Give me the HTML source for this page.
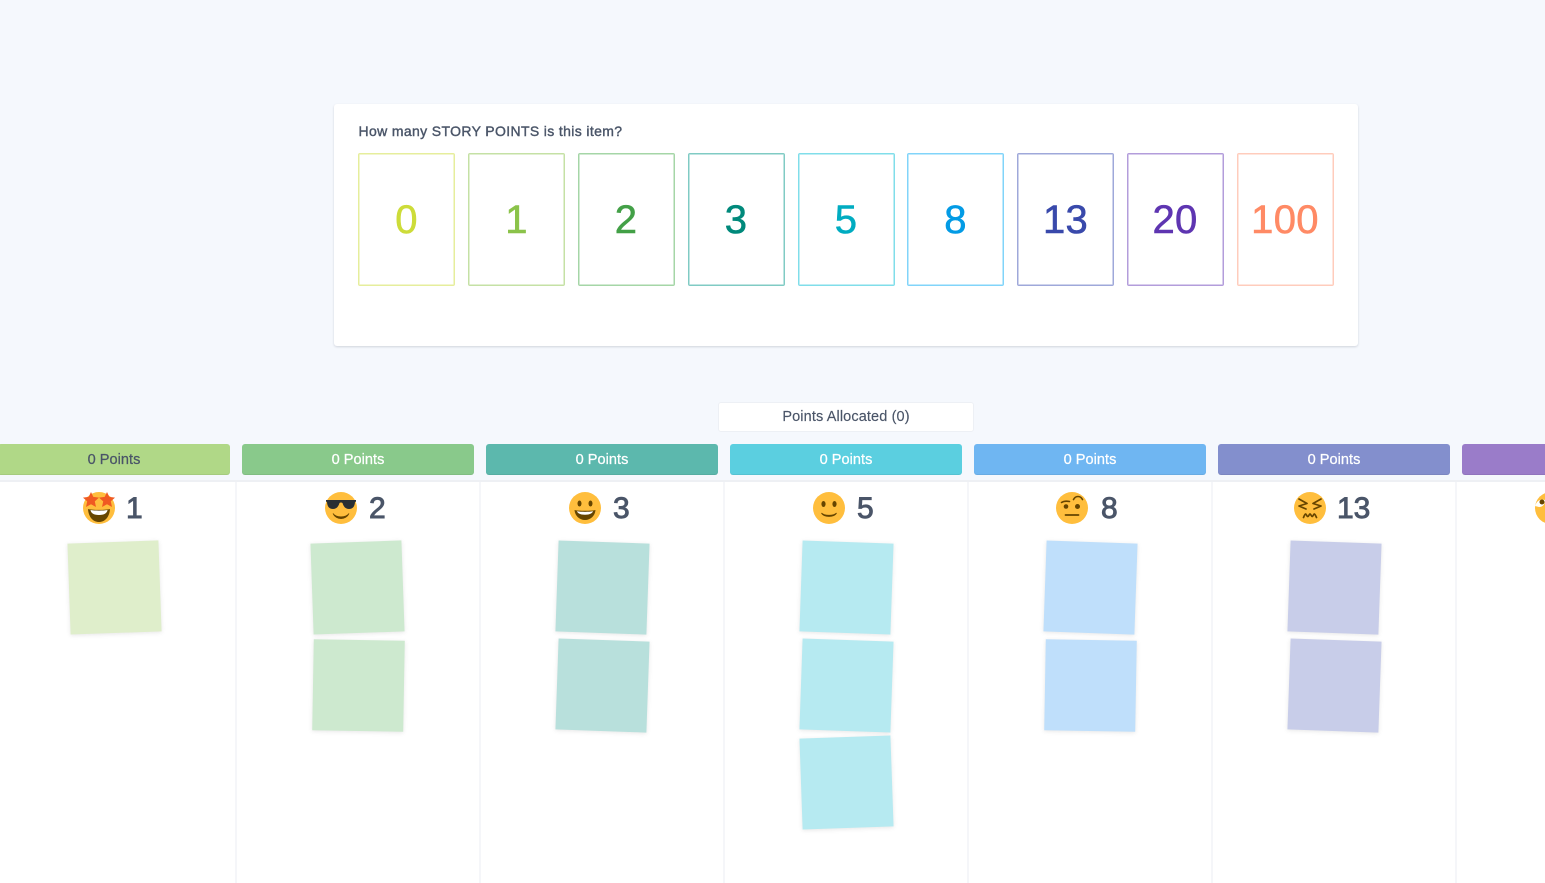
<!DOCTYPE html>
<html><head><meta charset="utf-8"><style>
html,body{margin:0;padding:0;width:1545px;height:883px;overflow:hidden;background:#f5f8fd}
body{position:relative;font-family:"Liberation Sans",sans-serif;color:#4a5568}
.a{position:absolute;box-sizing:border-box}
.panel{left:334px;top:104px;width:1023.5px;height:241.5px;background:#fff;border-radius:3px;box-shadow:0 1px 2px rgba(40,50,70,.18)}
.q{left:358.5px;top:123px;font-size:14px;line-height:16px;white-space:nowrap;-webkit-text-stroke:.4px #4a5568;letter-spacing:.36px}
.c{top:153px;width:97px;height:133px;background:#fff;border:1px solid;border-radius:2px;text-align:center;font-size:40px;line-height:132px;-webkit-text-stroke:.6px currentColor;letter-spacing:.3px}
.alloc{left:718px;top:402px;width:256px;height:30px;background:#fff;border:1px solid #edf0f5;border-radius:3px;text-align:center;font-size:14.5px;line-height:28px;letter-spacing:.12px;-webkit-text-stroke:.15px #4a5568}
.h{top:444px;width:232px;height:31px;border-radius:3px;text-align:center;color:#fff;font-size:14.5px;line-height:32.5px;box-shadow:inset 0 -1px 0 rgba(0,0,0,.06);-webkit-text-stroke:.25px currentColor;letter-spacing:.05px}
.board{left:0;top:480px;width:1545px;height:403px;background:#fff;border-top:2px solid #eef0f4}
.l{top:482px;width:2px;height:401px;background:#f5f6f9}
.n{top:490px;font-size:30px;line-height:38px;-webkit-text-stroke:.9px #4a5568;white-space:nowrap}
.s{width:90.5px;height:90.5px;box-shadow:0 1px 4px rgba(60,60,60,.13)}
svg{position:absolute;top:492px;width:32px;height:32px}
</style></head><body>
<div class="a panel"></div>
<div class="a q">How many STORY POINTS is this item?</div>
<div class="a c" style="left:358px;border-color:#e6ee9c;color:#cddc39;box-shadow:inset 0 0 0 .5px #e6ee9c">0</div>
<div class="a c" style="left:468px;border-color:#c5e1a5;color:#8bc34a;box-shadow:inset 0 0 0 .5px #c5e1a5">1</div>
<div class="a c" style="left:577.5px;border-color:#a5d6a7;color:#43a047;box-shadow:inset 0 0 0 .5px #a5d6a7">2</div>
<div class="a c" style="left:687.5px;border-color:#80cbc4;color:#00897b;box-shadow:inset 0 0 0 .5px #80cbc4">3</div>
<div class="a c" style="left:797.5px;border-color:#80deea;color:#00acc1;box-shadow:inset 0 0 0 .5px #80deea">5</div>
<div class="a c" style="left:907px;border-color:#81d4fa;color:#039be5;box-shadow:inset 0 0 0 .5px #81d4fa">8</div>
<div class="a c" style="left:1017px;border-color:#9fa8da;color:#3949ab;box-shadow:inset 0 0 0 .5px #9fa8da">13</div>
<div class="a c" style="left:1126.5px;border-color:#b39ddb;color:#5e35b1;box-shadow:inset 0 0 0 .5px #b39ddb">20</div>
<div class="a c" style="left:1236.5px;border-color:#ffccbc;color:#ff8a65;box-shadow:inset 0 0 0 .5px #ffccbc">100</div>

<div class="a alloc">Points Allocated (0)</div>

<div class="a h" style="left:-2px;background:#b0d887;color:#4a5568">0 Points</div>
<div class="a h" style="left:242px;background:#89c98b">0 Points</div>
<div class="a h" style="left:486px;background:#5cb8ad">0 Points</div>
<div class="a h" style="left:730px;background:#5bcfe0">0 Points</div>
<div class="a h" style="left:974px;background:#6fb6f2">0 Points</div>
<div class="a h" style="left:1218px;background:#838fcd">0 Points</div>
<div class="a h" style="left:1462px;background:#9a7cc9"></div>

<div class="a board"></div>
<div class="a l" style="left:235px"></div>
<div class="a l" style="left:479px"></div>
<div class="a l" style="left:723px"></div>
<div class="a l" style="left:967px"></div>
<div class="a l" style="left:1211px"></div>
<div class="a l" style="left:1455px"></div>

<div class="a n" style="left:126px">1</div>
<div class="a n" style="left:369px">2</div>
<div class="a n" style="left:613px">3</div>
<div class="a n" style="left:857px">5</div>
<div class="a n" style="left:1101px">8</div>
<div class="a n" style="left:1337px">13</div>

<svg style="left:83px" viewBox="0 0 32 32"><circle cx="16" cy="16" r="16" fill="#ffbe3d"/><path d="M5 17c3 1.200 19 1.200 22 0-.5 8-5 13-11 13S5.500 25 5 17z" fill="#664500"/><path d="M7.500 18c4 .8 13 .8 17 0-.4 3-3 5-8.500 5s-8.100-2-8.500-5z" fill="#fff"/><path d="M8 0l2.300 4.900 5.700.7-4.200 3.800 1.200 5.600L8 12.200 3 15l1.200-5.600L0 5.600l5.700-.7z" fill="#f05a22"/><path d="M24 0l2.300 4.900 5.700.7-4.200 3.800 1.200 5.600-5-2.800-5 2.800 1.200-5.600L16 5.600l5.700-.7z" fill="#f05a22"/></svg>

<svg style="left:325px" viewBox="0 0 32 32"><circle cx="16" cy="16" r="16" fill="#ffbe3d"/><path d="M1 8h30v1.500l-1 .6c-.3 4-2 6.900-6 6.900-3.500 0-5.500-2.500-6.500-6-.8-.7-2.200-.7-3 0-1 3.500-3 6-6.500 6-4 0-5.700-2.900-6-6.900l-1-.6z" fill="#292f33"/><path d="M8 21.500c3 4.500 13 4.500 16 0-3 6.800-13 6.800-16 0z" fill="#664500" stroke="#664500" stroke-width=".8"/></svg>

<svg style="left:569px" viewBox="0 0 32 32"><circle cx="16" cy="16" r="16" fill="#ffbe3d"/><ellipse cx="10.500" cy="11.500" rx="2" ry="3" fill="#664500"/><ellipse cx="21.500" cy="11.500" rx="2" ry="3" fill="#664500"/><path d="M5.500 18c3 1 18 1 21 0-.5 6-5 10-10.500 10S6 24 5.500 18z" fill="#664500"/><path d="M8 19.300c4 .8 12 .8 16 0-.4 1.700-3 3.500-8 3.500s-7.600-1.800-8-3.500z" fill="#fff"/></svg>

<svg style="left:813px" viewBox="0 0 32 32"><circle cx="16" cy="16" r="16" fill="#ffbe3d"/><ellipse cx="10.500" cy="12" rx="2.100" ry="3" fill="#664500"/><ellipse cx="21.500" cy="12" rx="2.100" ry="3" fill="#664500"/><path d="M8.500 21c3 3 12 3 15 0-1.800 4.600-13.200 4.600-15 0z" fill="#664500" stroke="#664500" stroke-width=".8"/></svg>

<svg style="left:1056px" viewBox="0 0 32 32"><circle cx="16" cy="16" r="16" fill="#ffbe3d"/><circle cx="10" cy="14.500" r="2.300" fill="#664500"/><circle cx="21.500" cy="14.500" r="2.500" fill="#664500"/><path d="M5.500 10.500c2-1.300 5-1.600 8-1M17.500 7.500c2-4 7-4 9 0" fill="none" stroke="#664500" stroke-width="1.600" stroke-linecap="round"/><path d="M9.500 23h13" stroke="#664500" stroke-width="1.800" stroke-linecap="round"/></svg>

<svg style="left:1294px" viewBox="0 0 32 32"><circle cx="16" cy="16" r="16" fill="#ffbe3d"/><path d="M5 7l8 4.500-8 2.500 7 3M27 7l-8 4.500 8 2.500-7 3M9.500 25.500c.8-2 1.400-3.500 2.100-3.500s1.200 2.500 2.200 2.500 1.300-2.500 2.200-2.500 1.300 2.500 2.200 2.500 1.400-2.500 2.100-2.500 1.300 1.500 2.200 3.500" fill="none" stroke="#664500" stroke-width="1.700" stroke-linecap="round" stroke-linejoin="round"/></svg>

<svg style="left:1535px" viewBox="0 0 32 32"><circle cx="16" cy="16" r="16" fill="#ffbe3d"/><path d="M0 14c2-6 6-7 10-6 0 4-2 7-6 7z" fill="#fff"/><circle cx="7" cy="10" r="2.500" fill="#664500"/></svg>

<div class="a s" style="left:68.500px;top:541.500px;background:#dfeecb;transform:rotate(-2deg)"></div>

<div class="a s" style="left:312px;top:541.500px;background:#cde9cf;transform:rotate(-2deg)"></div>
<div class="a s" style="left:312.500px;top:639.500px;background:#cde9cf;transform:rotate(1deg)"></div>

<div class="a s" style="left:556.500px;top:541.500px;background:#b8e0dc;transform:rotate(2deg)"></div>
<div class="a s" style="left:556.500px;top:639.500px;background:#b8e0dc;transform:rotate(2deg)"></div>

<div class="a s" style="left:800.500px;top:541.500px;background:#b6eaf1;transform:rotate(2deg)"></div>
<div class="a s" style="left:800.500px;top:639.500px;background:#b6eaf1;transform:rotate(2deg)"></div>
<div class="a s" style="left:800.500px;top:737px;background:#b6eaf1;transform:rotate(-2deg)"></div>

<div class="a s" style="left:1044.500px;top:541.500px;background:#bfdffb;transform:rotate(2deg)"></div>
<div class="a s" style="left:1044.500px;top:639.500px;background:#bfdffb;transform:rotate(1deg)"></div>

<div class="a s" style="left:1288.500px;top:541.500px;background:#c8cde9;transform:rotate(2deg)"></div>
<div class="a s" style="left:1288.500px;top:639.500px;background:#c8cde9;transform:rotate(2deg)"></div>
</body></html>
